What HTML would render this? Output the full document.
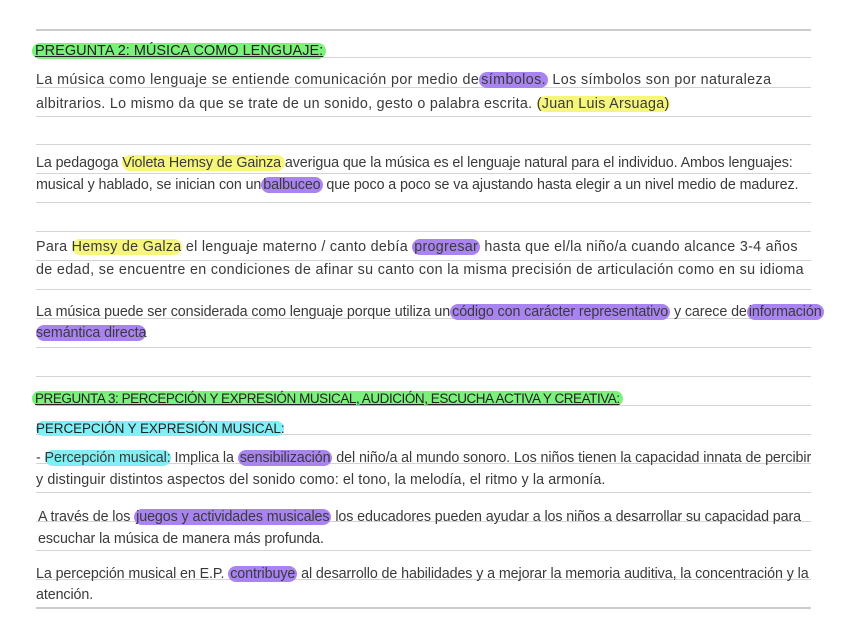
<!DOCTYPE html>
<html><head><meta charset="utf-8"><style>
body{margin:0;width:848px;height:636px;background:#fff;position:relative;overflow:hidden;font-family:"Liberation Sans",sans-serif;color:#3a3a3a}
.r{position:absolute;left:36px;width:775px;height:1px;background:#d4d4d4}
.t{position:absolute;left:36px;font-size:14.3px;white-space:nowrap;line-height:18px;letter-spacing:-0.1px}
.h{font-size:13.5px;text-decoration:underline;color:#222;letter-spacing:-0.3px}
.g{background:#7cf07c;border-radius:9px;padding:0 3px}
.y{background:#f6f67c;border-radius:8px}
.p{background:#a984f0;border-radius:9px;padding:0 2px}
.c{background:#80f0f6;border-radius:8px}
</style></head><body>
<div class="r" style="top:29px;height:2px;background:#ccc"></div>
<div class="r" style="top:57px"></div>
<div class="r" style="top:87px"></div>
<div class="r" style="top:116px"></div>
<div class="r" style="top:144px"></div>
<div class="r" style="top:173px"></div>
<div class="r" style="top:202px"></div>
<div class="r" style="top:231px"></div>
<div class="r" style="top:260px"></div>
<div class="r" style="top:289px"></div>
<div class="r" style="top:318px"></div>
<div class="r" style="top:347px"></div>
<div class="r" style="top:376px"></div>
<div class="r" style="top:405px"></div>
<div class="r" style="top:434px"></div>
<div class="r" style="top:463px"></div>
<div class="r" style="top:492px"></div>
<div class="r" style="top:521px"></div>
<div class="r" style="top:550px"></div>
<div class="r" style="top:579px"></div>
<div class="r" style="top:607px;height:2px;background:#ccc"></div>

<div class="t h" style="top:42px;left:32px;font-size:14.5px;letter-spacing:0"><span class="g">PREGUNTA 2: MÚSICA COMO LENGUAJE:</span></div>
<div class="t" style="top:71px;letter-spacing:0.4px">La música como lenguaje se entiende comunicación por medio de<span class="p">símbolos.</span> Los símbolos son por naturaleza</div>
<div class="t" style="top:95px;letter-spacing:0.3px">albitrarios. Lo mismo da que se trate de un sonido, gesto o palabra escrita. <span class="y">(Juan Luis Arsuaga)</span></div>
<div class="t" style="top:154px">La pedagoga <span class="y">Violeta Hemsy de Gainza </span>averigua que la música es el lenguaje natural para el individuo. Ambos lenguajes:</div>
<div class="t" style="top:176px">musical y hablado, se inician con un<span class="p">balbuceo</span> que poco a poco se va ajustando hasta elegir a un nivel medio de madurez.</div>
<div class="t" style="top:238px;letter-spacing:0.3px">Para <span class="y">Hemsy de Galza</span> el lenguaje materno / canto debía <span class="p">progresar</span> hasta que el/la niño/a cuando alcance 3-4 años</div>
<div class="t" style="top:261px;letter-spacing:0.35px">de edad, se encuentre en condiciones de afinar su canto con la misma precisión de articulación como en su idioma</div>
<div class="t" style="top:303px">La música puede ser considerada como lenguaje porque utiliza un<span class="p">código con carácter representativo</span> y carece de<span class="p">información</span></div>
<div class="t" style="top:324px"><span class="p" style="padding:0">semántica directa</span></div>
<div class="t h" style="top:390px;left:32px;letter-spacing:-0.45px"><span class="g">PREGUNTA 3: PERCEPCIÓN Y EXPRESIÓN MUSICAL, AUDICIÓN, ESCUCHA ACTIVA Y CREATIVA:</span></div>
<div class="t h" style="top:420px;text-decoration:none;letter-spacing:-0.1px"><span class="c">PERCEPCIÓN Y EXPRESIÓN MUSICAL:</span></div>
<div class="t" style="top:449px">- <span class="c">Percepción musical:</span> Implica la <span class="p">sensibilización</span> del niño/a al mundo sonoro. Los niños tienen la capacidad innata de percibir</div>
<div class="t" style="top:471px;letter-spacing:0.1px">y distinguir distintos aspectos del sonido como: el tono, la melodía, el ritmo y la armonía.</div>
<div class="t" style="top:508px;left:38px">A través de los <span class="p">juegos y actividades musicales</span> los educadores pueden ayudar a los niños a desarrollar su capacidad para</div>
<div class="t" style="top:530px;left:38px">escuchar la música de manera más profunda.</div>
<div class="t" style="top:565px">La percepción musical en E.P. <span class="p">contribuye</span> al desarrollo de habilidades y a mejorar la memoria auditiva, la concentración y la</div>
<div class="t" style="top:586px">atención.</div>
</body></html>
